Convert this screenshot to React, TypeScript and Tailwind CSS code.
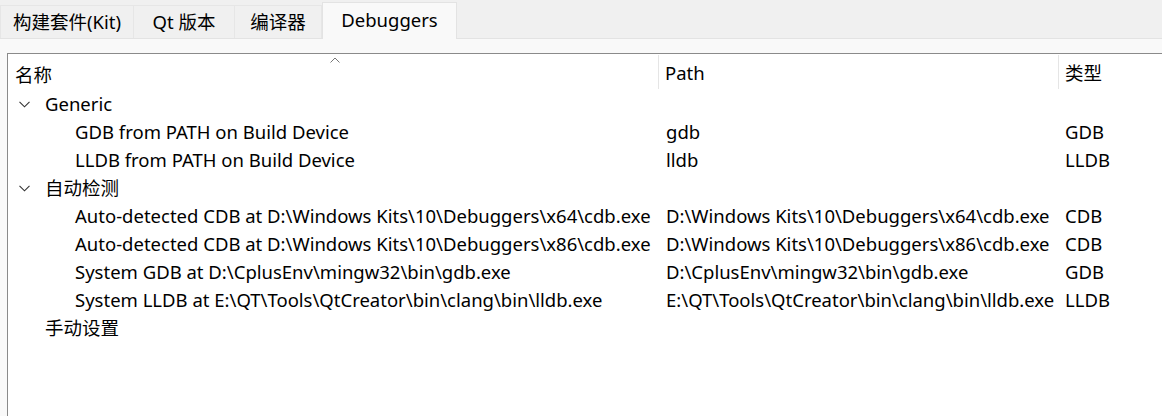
import React from "react";

const font = { fontFamily: '"Noto Sans", "Noto Sans CJK SC", sans-serif' };

type Row = { name: string; path?: string; type?: string; level: 0 | 1; open?: boolean };

const rows: Row[] = [
  { name: "Generic", level: 0, open: true },
  { name: "GDB from PATH on Build Device", path: "gdb", type: "GDB", level: 1 },
  { name: "LLDB from PATH on Build Device", path: "lldb", type: "LLDB", level: 1 },
  { name: "自动检测", level: 0, open: true },
  {
    name: "Auto-detected CDB at D:\\Windows Kits\\10\\Debuggers\\x64\\cdb.exe",
    path: "D:\\Windows Kits\\10\\Debuggers\\x64\\cdb.exe",
    type: "CDB",
    level: 1,
  },
  {
    name: "Auto-detected CDB at D:\\Windows Kits\\10\\Debuggers\\x86\\cdb.exe",
    path: "D:\\Windows Kits\\10\\Debuggers\\x86\\cdb.exe",
    type: "CDB",
    level: 1,
  },
  {
    name: "System GDB at D:\\CplusEnv\\mingw32\\bin\\gdb.exe",
    path: "D:\\CplusEnv\\mingw32\\bin\\gdb.exe",
    type: "GDB",
    level: 1,
  },
  {
    name: "System LLDB at E:\\QT\\Tools\\QtCreator\\bin\\clang\\bin\\lldb.exe",
    path: "E:\\QT\\Tools\\QtCreator\\bin\\clang\\bin\\lldb.exe",
    type: "LLDB",
    level: 1,
  },
  { name: "手动设置", level: 0 },
];

const tabs = ["构建套件(Kit)", "Qt 版本", "编译器", "Debuggers"];

function Chevron() {
  return (
    <svg width="11" height="7" viewBox="0 0 11 7" className="text-[#333]">
      <path d="M0.5 0.8 L5.5 5.8 L10.5 0.8" fill="none" stroke="currentColor" strokeWidth="1.1" />
    </svg>
  );
}

export default function App() {
  return (
    <div className="w-[1162px] h-[416px] bg-[#f0f0f0] overflow-hidden flex flex-col text-[18.5px] text-black" style={font}>
      <div className="flex items-end h-[38px] shrink-0">
        {tabs.map((t, i) => {
          const active = i === tabs.length - 1;
          const w = ["w-[134px]", "w-[101px]", "w-[87px]", "w-[135px]"][i];
          return (
            <div
              key={t}
              className={`${w} flex items-center justify-center border border-b-0 whitespace-nowrap ${
                active
                  ? "h-[37px] bg-[#f9f9f9] border-[#e3e3e3] -mb-px relative z-10"
                  : "h-[33px] bg-[#f0f0f0] border-[#e6e6e6] border-l-0 first:border-l"
              }`}
            >
              <span className={active ? "pb-[2px]" : ""}>{t}</span>
            </div>
          );
        })}
      </div>
      <div className="flex-1 bg-[#f9f9f9] border-t border-[#e3e3e3] pt-[14px] pl-[7px] flex flex-col">
        <div className="flex-1 bg-white border-l border-t border-[#8a8a8a] relative">
          <div className="absolute left-[322px] top-[3px] text-[#777]">
            <svg width="10" height="6" viewBox="0 0 10 6">
              <path d="M0.5 5.5 L5 1 L9.5 5.5" fill="none" stroke="currentColor" strokeWidth="1" />
            </svg>
          </div>
          <div className="flex h-[36px] items-center">
            <div className="w-[650px] pl-[7px] pt-[6px]">名称</div>
            <div className="w-[400px] h-[34px] border-l border-[#e5e5e5] pl-[6px] pt-[4px]">Path</div>
            <div className="flex-1 h-[34px] border-l border-[#e5e5e5] pl-[6px] pt-[4px]">类型</div>
          </div>
          {rows.map((r, i) => (
            <div key={i} className="flex h-[28px] items-center">
              <div className="w-[651px] flex items-center">
                {r.level === 0 ? (
                  <>
                    <div className="w-[37px] flex justify-start pl-[11px]">{r.open ? <Chevron /> : null}</div>
                    <span>{r.name}</span>
                  </>
                ) : (
                  <span className="pl-[67px] whitespace-nowrap">{r.name}</span>
                )}
              </div>
              <div className="w-[400px] pl-[7px] whitespace-nowrap">{r.path}</div>
              <div className="flex-1 pl-[6px]">{r.type}</div>
            </div>
          ))}
        </div>
      </div>
    </div>
  );
}
